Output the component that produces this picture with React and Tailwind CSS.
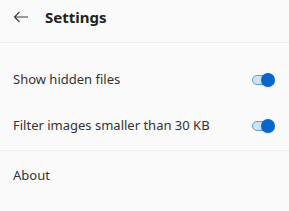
import React, { useState } from "react"

function Toggle({ on, onChange }) {
  return (
    <button
      onClick={() => onChange(!on)}
      className="relative flex items-center w-[24px] h-[16px]"
    >
      <span className={`block w-[22px] h-[10px] rounded-full border ${on ? "bg-[#cfe3f7] border-[#5a9ee0]" : "bg-gray-200 border-gray-400"}`} />
      <span
        className={`absolute top-[1px] w-[14px] h-[14px] rounded-full shadow-sm ${on ? "left-[9px] bg-[#0a66c8]" : "left-[-1px] bg-white"}`}
      />
    </button>
  )
}

export default function App() {
  const [hidden, setHidden] = useState(true)
  const [filter, setFilter] = useState(true)

  return (
    <div
      className="w-[289px] h-[211px] bg-[#fafafa] text-[#333] overflow-hidden"
      style={{ fontFamily: '"Noto Sans", "Open Sans", sans-serif' }}
    >
      {/* top bar */}
      <div className="h-[43px] flex items-center border-b border-[#ececec] pb-[8px]">
        <svg className="ml-[13px]" width="16" height="12" viewBox="0 0 16 12" fill="none" stroke="#3a3a3a" strokeWidth="1.1">
          <path d="M15 6H1.5M6.5 1L1.5 6l5 5" />
        </svg>
        <span className="ml-[16px] text-[15px] font-bold text-[#222]">Settings</span>
      </div>

      <div className="h-[108px] flex flex-col pt-[14px] border-b border-[#ececec]">
        <div className="h-[46px] flex items-center justify-between pl-[13px] pr-[13px]">
          <span className="text-[13px]">Show hidden files</span>
          <Toggle on={hidden} onChange={setHidden} />
        </div>
        <div className="h-[46px] flex items-center justify-between pl-[13px] pr-[13px]">
          <span className="text-[13px]">Filter images smaller than 30 KB</span>
          <Toggle on={filter} onChange={setFilter} />
        </div>
      </div>

      <div className="h-[50px] flex items-center pl-[13px]">
        <span className="text-[13px]">About</span>
      </div>
    </div>
  )
}
